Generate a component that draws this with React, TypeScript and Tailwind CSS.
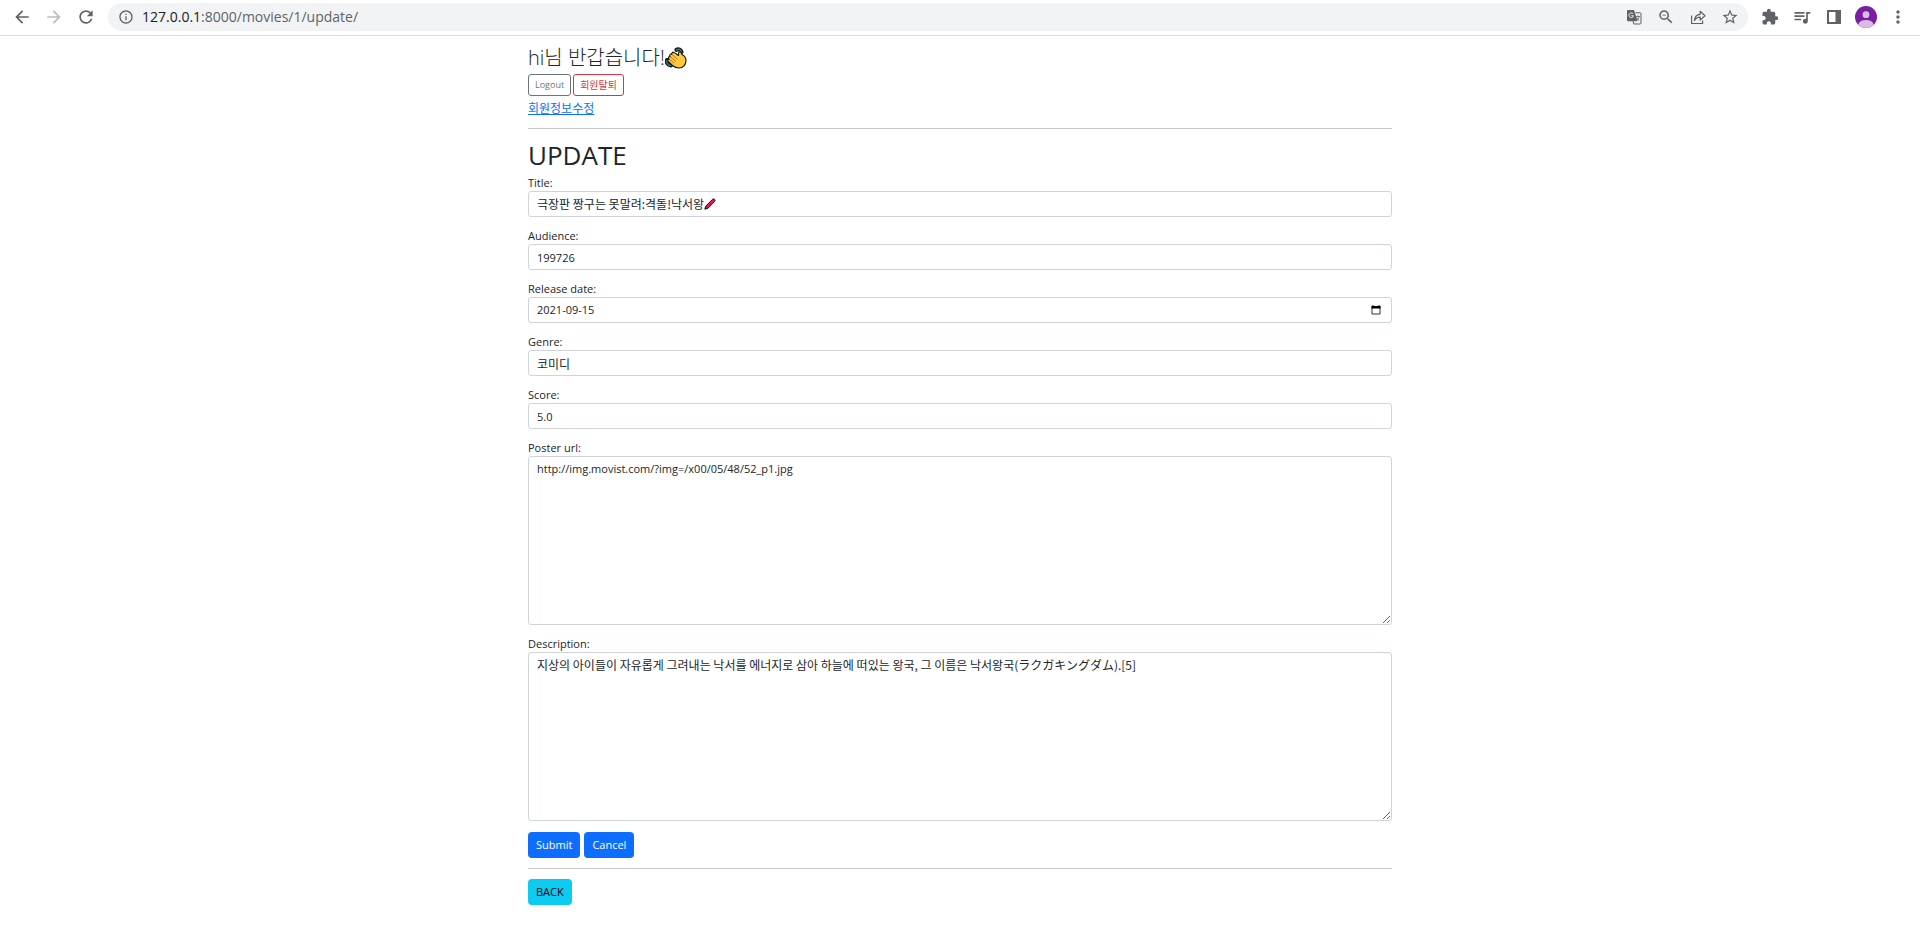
import type { ReactNode } from "react";
import {
  MdArrowBack,
  MdArrowForward,
  MdExtension,
  MdInfoOutline,
  MdMoreVert,
  MdOutlineStarBorder,
  MdQueueMusic,
  MdRefresh,
  MdZoomOut,
} from "react-icons/md";

const control =
  "block w-full rounded-[3px] border border-[#ced4da] bg-white px-2 leading-4 text-[#212529] outline-none";
const korean = "font-['Noto_Sans_CJK_KR',sans-serif] text-[12px]";

function TranslateIcon() {
  return (
    <svg viewBox="0 0 16 16" className="size-4" aria-hidden="true">
      <path d="M9.5 3.8H14a1 1 0 0 1 1 1V14a1 1 0 0 1-1 1H7.800l-.8-3" fill="#f1f3f4" stroke="#5f6368" />
      <path d="M2 1h6l3.600 11.200H2a1 1 0 0 1-1-1V2a1 1 0 0 1 1-1z" fill="#5f6368" />
      <path d="M7 4.800a2.300 2.300 0 1 0 .5 2H5.300" fill="none" stroke="#f1f3f4" />
      <path d="M9.800 7.500H14M11.800 6.300v1.200M13.200 7.500c-.3 1.800-1.400 3-2.400 3.800M10.700 8.500c.6 1.200 1.500 2.200 2.700 3" fill="none" stroke="#5f6368" strokeWidth=".8" />
    </svg>
  );
}

function ShareIcon() {
  return (
    <svg viewBox="0 0 16 16" className="size-4" fill="none" stroke="#5f6368" strokeWidth="1.2" aria-hidden="true">
      <path d="M1.600 6.500v8h11v-3" />
      <path d="M4.500 11.500c.3-3.800 2.300-6 5.700-6.200V2.300l4.800 4.400-4.800 4.300V8.200c-2.600 0-4.400 1-5.700 3.300z" strokeLinejoin="round" />
    </svg>
  );
}

function SidePanelIcon() {
  return (
    <svg viewBox="0 0 14 14" className="size-3.5" aria-hidden="true">
      <path d="M0 0h14v14H0zM2 2v10h6.500V2z" fill="#5f6368" fillRule="evenodd" />
    </svg>
  );
}

function Avatar() {
  return (
    <svg viewBox="0 0 22 22" className="size-[22px]" aria-hidden="true">
      <defs>
        <clipPath id="avatar-clip">
          <circle cx="11" cy="11" r="11" />
        </clipPath>
      </defs>
      <circle cx="11" cy="11" r="11" fill="#7b1fa2" />
      <g fill="#d7bde2" clipPath="url(#avatar-clip)">
        <circle cx="11" cy="8.700" r="3.400" />
        <ellipse cx="11" cy="18.500" rx="7.500" ry="4.500" />
      </g>
    </svg>
  );
}

function WavingHand() {
  return (
    <svg viewBox="0 0 22 22" className="size-[22px]" role="img" aria-label="👋" strokeLinecap="round" strokeLinejoin="round">
      <g fill="none">
        <path d="M11.500 2.800c2-1.300 4.500-.2 5 2.200M2 13c-.8 2.800.8 5.300 4 5.500" stroke="#111" strokeWidth="4" />
        <path d="M11.500 2.800c2-1.300 4.500-.2 5 2.200M2 13c-.8 2.800.8 5.300 4 5.500" stroke="#31788a" strokeWidth="1.600" />
      </g>
      <path
        d="M7.500 18.500L3.200 14.500c-1.200-1.300 0-2.700 1.200-2.200-1.800-1.500-.6-3.300.8-2.700-1.300-1.600.3-3.200 1.700-2.300-.5-1.600 1.200-2.800 2.500-1.700L13.500 8.500V6.200c0-1.700 2.300-1.900 2.700-.4L17 7.500c2.500 1.200 4 3.300 4 6.300 0 4.200-3 7.200-7 7.200-2.500 0-4.500-.8-6.500-2.500z"
        fill="#ffc83d"
        stroke="#111"
        strokeWidth="1.100"
      />
      <path d="M4.800 12.500l4 3.500M5.700 10l4.800 4.200M7.300 7.700l4.700 4.300" stroke="#a86400" strokeWidth=".8" fill="none" />
    </svg>
  );
}

function Crayon() {
  return (
    <svg viewBox="0 0 12 12" className="size-3 shrink-0" role="img" aria-label="🖍">
      <path d="M.8 11.200l1-3L8.500 1.300c1.400-1.200 3.300.5 2.200 2L4 10.200z" fill="#e3165b" stroke="#111" strokeWidth="1" strokeLinejoin="round" />
    </svg>
  );
}

function IconButton({ label, children }: { label: string; children: ReactNode }) {
  return (
    <button type="button" aria-label={label} className="flex size-6 items-center justify-center text-[#5f6368]">
      {children}
    </button>
  );
}

function BrowserBar() {
  return (
    <header className="flex h-9 items-center border-b border-[#dadce0] bg-white px-2.5 pb-0.5">
      <nav className="flex gap-2" aria-label="History">
        <IconButton label="Back"><MdArrowBack size={20} /></IconButton>
        <IconButton label="Forward"><MdArrowForward size={20} className="text-[#babcbe]" /></IconButton>
        <IconButton label="Reload"><MdRefresh size={20} /></IconButton>
      </nav>
      <div className="ml-2.5 flex h-7 flex-1 items-center rounded-full bg-[#f1f3f4] pr-1.5 pl-2.5">
        <MdInfoOutline size={16} className="text-[#5f6368]" />
        <p className="ml-2 flex-1 text-[14px] leading-5 text-[#202124]">
          127.0.0.1<span className="text-[#5f6368]">:8000/movies/1/update/</span>
        </p>
        <div className="flex gap-2">
          <IconButton label="Translate this page"><TranslateIcon /></IconButton>
          <IconButton label="Zoom"><MdZoomOut size={18} /></IconButton>
          <IconButton label="Share this page"><ShareIcon /></IconButton>
          <IconButton label="Bookmark this tab"><MdOutlineStarBorder size={18} /></IconButton>
        </div>
      </div>
      <div className="ml-2.5 flex gap-2">
        <IconButton label="Extensions"><MdExtension size={18} /></IconButton>
        <IconButton label="Media controls"><MdQueueMusic size={20} /></IconButton>
        <IconButton label="Side panel"><SidePanelIcon /></IconButton>
        <IconButton label="Profile"><Avatar /></IconButton>
        <IconButton label="Menu"><MdMoreVert size={20} /></IconButton>
      </div>
    </header>
  );
}

function Field({ id, label, children }: { id: string; label: string; children: ReactNode }) {
  return (
    <div className="mb-[11px]">
      <label htmlFor={id} className="block leading-4">{label}</label>
      {children}
    </div>
  );
}

export default function App() {
  return (
    <div className="min-h-screen bg-white font-['Open_Sans','Noto_Sans_CJK_KR',sans-serif]">
      <BrowserBar />
      <main className="mx-auto max-w-[864px] pt-2.5 text-[11px] leading-4 text-[#212529]">
        <h3 className="flex items-center pb-1 text-[20px] leading-6 font-light">
          hi님 반갑습니다!<WavingHand />
        </h3>
        <div className="flex gap-0.5">
          <button type="button" className="h-[22px] rounded-[3px] border border-[#6c757d] px-1.5 text-[9px] text-[#6c757d]">Logout</button>
          <button type="button" className="h-[22px] rounded-[3px] border border-[#dc3545] px-1.5 text-[10px] text-[#dc3545]">회원탈퇴</button>
        </div>
        <a href="#profile" className="mt-[5px] block w-fit text-[12px] text-[#0d6efd] underline">회원정보수정</a>
        <hr className="mt-[11px] mb-2.5 border-[#c8c9ca]" />
        <h1 className="pb-1 text-[26px] leading-8">UPDATE</h1>
        <form onSubmit={(event) => event.preventDefault()}>
          <Field id="title" label="Title:">
            <div className={`${control} ${korean} flex h-[26px] items-center`}>
              <input id="title" defaultValue="극장판 짱구는 못말려:격돌!낙서왕" className="field-sizing-content outline-none" />
              <Crayon />
            </div>
          </Field>
          <Field id="audience" label="Audience:">
            <input id="audience" defaultValue="199726" className={`${control} h-[26px]`} />
          </Field>
          <Field id="release" label="Release date:">
            <div className={`${control} flex h-[26px] items-center justify-between`}>
              <input id="release" defaultValue="2021-09-15" className="flex-1 outline-none" />
              <svg viewBox="0 0 10 10" className="mr-0.5 size-2.5" aria-hidden="true">
                <path d="M2 0v1M8 0v1" stroke="#000" />
                <path d="M1 1.500h8V9H1z" fill="none" stroke="#333" />
                <path d="M.5 1h9v2.500h-9z" />
              </svg>
            </div>
          </Field>
          <Field id="genre" label="Genre:">
            <input id="genre" defaultValue="코미디" className={`${control} ${korean} h-[26px]`} />
          </Field>
          <Field id="score" label="Score:">
            <input id="score" defaultValue="5.0" className={`${control} h-[26px]`} />
          </Field>
          <Field id="poster" label="Poster url:">
            <textarea id="poster" defaultValue="http://img.movist.com/?img=/x00/05/48/52_p1.jpg" className={`${control} h-[169px] resize-y py-1`} />
          </Field>
          <Field id="description" label="Description:">
            <textarea id="description" defaultValue="지상의 아이들이 자유롭게 그려내는 낙서를 에너지로 삼아 하늘에 떠있는 왕국, 그 이름은 낙서왕국(ラクガキングダム).[5]" className={`${control} ${korean} h-[169px] resize-y py-1`} />
          </Field>
          <div className="flex gap-1">
            <button type="submit" className="h-[26px] rounded bg-[#0d6efd] px-2 text-white">Submit</button>
            <button type="button" className="h-[26px] rounded bg-[#0d6efd] px-2 text-white">Cancel</button>
          </div>
        </form>
        <hr className="my-2.5 border-[#c8c9ca]" />
        <button type="button" className="h-[26px] rounded bg-[#0dcaf0] px-2 text-black">BACK</button>
      </main>
    </div>
  );
}
